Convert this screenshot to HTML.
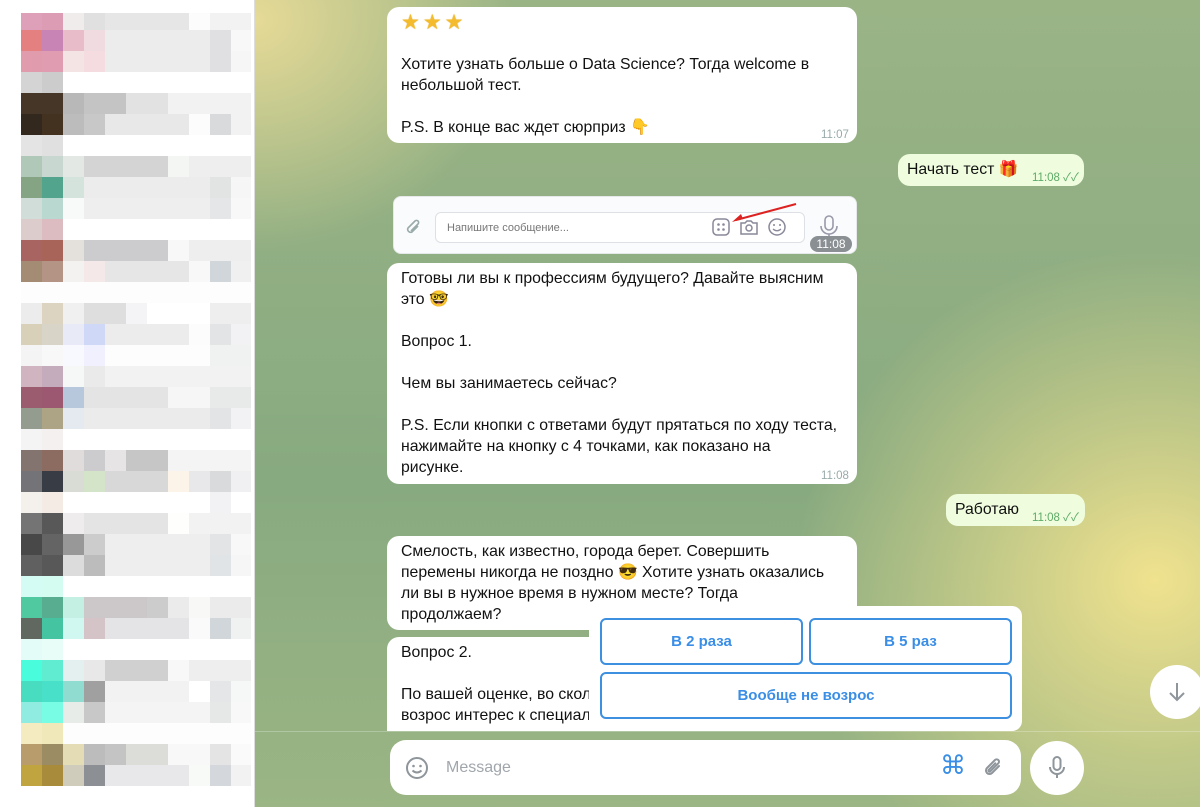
<!DOCTYPE html>
<html><head><meta charset="utf-8">
<style>
*{margin:0;padding:0;box-sizing:border-box}
body{width:1200px;height:807px;overflow:hidden;position:relative;font-family:"Liberation Sans","Noto Sans CJK SC",sans-serif;background:#fff}
#side{position:absolute;left:0;top:0;width:255px;height:807px;background:#fff;border-right:1px solid #ddd}
.r{position:absolute;left:21px;width:230px;height:21px}
#chat{position:absolute;left:255px;top:0;width:945px;height:807px;
background:radial-gradient(ellipse 360px 330px at 900px 580px,#f0e28e 0%,rgba(240,226,142,0) 100%),radial-gradient(ellipse 260px 230px at 0px 20px,#e6da96 0%,rgba(230,218,150,0) 100%),linear-gradient(180deg,#9ab486 0%,#88aa80 60%,#9bb584 100%)}
.b{position:absolute;background:#fff;border-radius:12px;font-size:15.8px;line-height:21px;color:#111;padding:0 14px;white-space:nowrap}
.o{background:#effdde}
.t{position:absolute;font-size:11.5px;color:#9aa}
.o .t{color:#5daa68}
.kb{position:absolute;top:606px;width:433px;height:125px;background:#fff;border-radius:10px}
.btn{position:absolute;border:2px solid #3d8fe0;border-radius:6px;color:#3a8ee6;font-weight:bold;font-size:15px;display:flex;align-items:center;justify-content:center}
</style></head><body>
<div id="side">
<div class="r" style="top:13px;height:17px;background:linear-gradient(90deg,#dea0b8 0 21px,#dc9cb4 21px 42px,#f0ecec 42px 63px,#e0e0e0 63px 84px,#e6e6e6 84px 168px,#fcfcfc 168px 189px,#f2f2f2 189px)"></div>
<div class="r" style="top:30px;background:linear-gradient(90deg,#e48080 0 21px,#c884b4 21px 42px,#e8bcc8 42px 63px,#f0dce0 63px 84px,#ececec 84px 189px,#e0e0e2 189px 210px,#f8f8f8 210px)"></div>
<div class="r" style="top:51px;background:linear-gradient(90deg,#e09cac 0 21px,#e09cb0 21px 42px,#f4e4e4 42px 63px,#f4dce0 63px 84px,#ececec 84px 189px,#e0e0e2 189px 210px,#f6f6f6 210px)"></div>
<div class="r" style="top:72px;background:linear-gradient(90deg,#d4d4d4 0 21px,#ccc 21px 42px,#fff 42px)"></div>
<div class="r" style="top:93px;background:linear-gradient(90deg,#463628 0 42px,#b8b8b8 42px 63px,#c4c4c4 63px 105px,#e2e2e2 105px 147px,#f2f2f2 147px)"></div>
<div class="r" style="top:114px;background:linear-gradient(90deg,#32281e 0 21px,#42321f 21px 42px,#bcbcbc 42px 63px,#c8c8c8 63px 84px,#e8e8e8 84px 168px,#fcfcfc 168px 189px,#d8dadc 189px 210px,#f2f2f2 210px)"></div>
<div class="r" style="top:135px;background:linear-gradient(90deg,#e4e4e4 0 21px,#e0e0e0 21px 42px,#fff 42px)"></div>
<div class="r" style="top:156px;background:linear-gradient(90deg,#b0c8b8 0 21px,#c8d8d0 21px 42px,#e4e8e4 42px 63px,#d4d4d4 63px 147px,#f4f6f4 147px 168px,#eeeeee 168px)"></div>
<div class="r" style="top:177px;background:linear-gradient(90deg,#84a484 0 21px,#52a48c 21px 42px,#d4e4dc 42px 63px,#ececec 63px 189px,#e2e4e4 189px 210px,#f6f6f6 210px)"></div>
<div class="r" style="top:198px;background:linear-gradient(90deg,#d0ddd8 0 21px,#b8d8d0 21px 42px,#f8fafa 42px 63px,#eeeeee 63px 189px,#e4e6e8 189px 210px,#f8f8f8 210px)"></div>
<div class="r" style="top:219px;background:linear-gradient(90deg,#dccccc 0 21px,#dcbcc0 21px 42px,#fff 42px)"></div>
<div class="r" style="top:240px;background:linear-gradient(90deg,#a86460 0 21px,#a86458 21px 42px,#e4e0dc 42px 63px,#cccccf 63px 147px,#f8f8f8 147px 168px,#eeeeee 168px)"></div>
<div class="r" style="top:261px;background:linear-gradient(90deg,#a48c74 0 21px,#b49484 21px 42px,#f4f2f0 42px 63px,#f4e8e8 63px 84px,#e6e6e6 84px 168px,#f8f8f8 168px 189px,#d0d6da 189px 210px,#f0f0f0 210px)"></div>
<div class="r" style="top:282px;background:#fdfdfd"></div>
<div class="r" style="top:303px;background:linear-gradient(90deg,#ececec 0 21px,#dcd4c0 21px 42px,#f0f0f0 42px 63px,#dedede 63px 105px,#f4f4f6 105px 126px,#fff 126px 189px,#eeeeee 189px)"></div>
<div class="r" style="top:324px;background:linear-gradient(90deg,#d8d0b8 0 21px,#d8d4c8 21px 42px,#e8eaf8 42px 63px,#d0d8f8 63px 84px,#ececec 84px 168px,#fcfcfc 168px 189px,#e2e4e6 189px 210px,#f2f2f4 210px)"></div>
<div class="r" style="top:345px;background:linear-gradient(90deg,#f4f4f4 0 21px,#f8f8f8 21px 42px,#f8f8ff 42px 63px,#f0f0ff 63px 84px,#fdfdfd 84px 189px,#f0f2f2 189px)"></div>
<div class="r" style="top:366px;background:linear-gradient(90deg,#d0b4c0 0 21px,#c4acbc 21px 42px,#f6f8f8 42px 63px,#eaeaea 63px 84px,#f2f2f2 84px)"></div>
<div class="r" style="top:387px;background:linear-gradient(90deg,#9c5c70 0 21px,#9c5870 21px 42px,#b8c8dc 42px 63px,#e4e4e4 63px 147px,#f6f6f6 147px 189px,#e8eaea 189px)"></div>
<div class="r" style="top:408px;background:linear-gradient(90deg,#949c90 0 21px,#aca484 21px 42px,#e4eaf0 42px 63px,#ebebeb 63px 189px,#e2e4e6 189px 210px,#f2f2f4 210px)"></div>
<div class="r" style="top:429px;background:linear-gradient(90deg,#f4f4f4 0 21px,#f4f0f0 21px 42px,#fff 42px)"></div>
<div class="r" style="top:450px;background:linear-gradient(90deg,#847470 0 21px,#8c6c60 21px 42px,#e0dcdc 42px 63px,#cccccf 63px 84px,#e6e4e4 84px 105px,#c6c6c6 105px 147px,#f4f4f4 147px)"></div>
<div class="r" style="top:471px;background:linear-gradient(90deg,#747478 0 21px,#383c44 21px 42px,#d8dcd4 42px 63px,#d4e4c8 63px 84px,#d8d8d8 84px 147px,#fcf4e8 147px 168px,#e8e8ea 168px 189px,#d8dadc 189px 210px,#f0f0f2 210px)"></div>
<div class="r" style="top:492px;background:linear-gradient(90deg,#f4f0ec 0 21px,#f4ece4 21px 42px,#fff 42px 189px,#f2f2f4 189px 210px,#fff 210px)"></div>
<div class="r" style="top:513px;background:linear-gradient(90deg,#747474 0 21px,#585858 21px 42px,#eeecec 42px 63px,#e4e4e4 63px 147px,#fefefc 147px 168px,#f2f2f2 168px)"></div>
<div class="r" style="top:534px;background:linear-gradient(90deg,#484848 0 21px,#646464 21px 42px,#989898 42px 63px,#ccc 63px 84px,#eeeeee 84px 189px,#e2e4e6 189px 210px,#f8f8f8 210px)"></div>
<div class="r" style="top:555px;background:linear-gradient(90deg,#606060 0 21px,#585858 21px 42px,#dcdcdc 42px 63px,#bcbcbc 63px 84px,#eeeeee 84px 189px,#e0e4e6 189px 210px,#f6f6f6 210px)"></div>
<div class="r" style="top:576px;background:linear-gradient(90deg,#d4fcf4 0 21px,#d4fcf0 21px 42px,#fff 42px)"></div>
<div class="r" style="top:597px;background:linear-gradient(90deg,#50c8a0 0 21px,#58ac90 21px 42px,#c4f0e4 42px 63px,#ccc8ca 63px 126px,#cccccc 126px 147px,#ebebeb 147px 168px,#f8f8f6 168px 189px,#ebebeb 189px)"></div>
<div class="r" style="top:618px;background:linear-gradient(90deg,#606860 0 21px,#44c4a0 21px 42px,#d0f8f0 42px 63px,#d4c4c8 63px 84px,#e4e4e6 84px 168px,#fafafa 168px 189px,#d0d6da 189px 210px,#f0f2f2 210px)"></div>
<div class="r" style="top:639px;background:linear-gradient(90deg,#e4fcf8 0 21px,#e8fcf8 21px 42px,#fff 42px)"></div>
<div class="r" style="top:660px;background:linear-gradient(90deg,#48fcdc 0 21px,#60ecd0 21px 42px,#e4f0f0 42px 63px,#e8e8e8 63px 84px,#d0d0d0 84px 147px,#f8f8f8 147px 168px,#eeeeee 168px)"></div>
<div class="r" style="top:681px;background:linear-gradient(90deg,#48dcc0 0 21px,#48e0c8 21px 42px,#90dcd0 42px 63px,#a0a0a0 63px 84px,#f2f2f2 84px 168px,#fff 168px 189px,#e4e6e8 189px 210px,#f6f8f8 210px)"></div>
<div class="r" style="top:702px;background:linear-gradient(90deg,#90ece0 0 21px,#78fce4 21px 42px,#e8ece8 42px 63px,#c8c8c8 63px 84px,#f4f4f4 84px 189px,#e6e8e8 189px 210px,#f8f8f8 210px)"></div>
<div class="r" style="top:723px;background:linear-gradient(90deg,#f4ecc0 0 21px,#f0e8b8 21px 42px,#fdfdfd 42px)"></div>
<div class="r" style="top:744px;background:linear-gradient(90deg,#b89c6c 0 21px,#9c8c64 21px 42px,#e4dcb4 42px 63px,#bcbcbc 63px 84px,#c4c4c4 84px 105px,#dcdcd8 105px 147px,#f8f8f8 147px 189px,#e4e4e4 189px 210px,#fafafa 210px)"></div>
<div class="r" style="top:765px;background:linear-gradient(90deg,#c0a440 0 21px,#a88c3c 21px 42px,#d0ccbc 42px 63px,#8c9094 63px 84px,#e8e8ea 84px 168px,#f8faf8 168px 189px,#d4d8dc 189px 210px,#f2f2f2 210px)"></div>
</div>
<div id="chat">
<div class="b" style="left:132px;top:7px;width:470px;height:136px;padding-top:5px">
<div style="font-size:21px;line-height:21px;color:#f4bc2c;letter-spacing:3px;font-family:'DejaVu Sans',sans-serif;text-shadow:0 0 1px #d89a10">★★★</div><div style="height:21px"></div>
Хотите узнать больше о Data Science? Тогда welcome в<br>небольшой тест.<br><br>P.S. В конце вас ждет сюрприз <span style="color:#e8a828">👇</span>
<div class="t" style="left:434px;top:118px">11:07</div></div>

<div class="b o" style="left:643px;top:154px;width:186px;height:32px;padding-top:5px;padding-left:9px">Начать тест <span style="color:#d33">🎁</span>
<div class="t" style="left:134px;top:14px">11:08 ✓✓</div></div>

<div style="position:absolute;left:138px;top:196px;width:464px;height:58px;background:#fafbfc;border-radius:8px;border:1px solid #e6e8ea">
<svg style="position:absolute;left:10px;top:20px" width="18" height="20" viewBox="0 0 18 20"><path d="M14 9l-6 6a3 3 0 0 1-4-4l7-7a2 2 0 0 1 3 3l-7 7" fill="none" stroke="#9aa" stroke-width="1.6"/></svg>
<div style="position:absolute;left:41px;top:15px;width:370px;height:31px;border:1px solid #dde0e4;border-radius:6px;background:#fff;font-size:11px;color:#777;padding:9px 11px">Напишите сообщение...</div>
<svg style="position:absolute;left:318px;top:21px" width="80" height="20" viewBox="0 0 80 20"><rect x="1" y="1" width="16" height="16" rx="4" fill="none" stroke="#889" stroke-width="1.5"/><circle cx="6.5" cy="6.5" r="1.3" fill="#889"/><circle cx="11.5" cy="6.5" r="1.3" fill="#889"/><circle cx="6.5" cy="11.5" r="1.3" fill="#889"/><circle cx="11.5" cy="11.5" r="1.3" fill="#889"/><path d="M29 5h4l2-2h4l2 2h4v11h-16z" fill="none" stroke="#889" stroke-width="1.5"/><circle cx="37" cy="10" r="3" fill="none" stroke="#889" stroke-width="1.5"/><circle cx="65" cy="9" r="8" fill="none" stroke="#889" stroke-width="1.5"/><circle cx="62" cy="7" r="1" fill="#889"/><circle cx="68" cy="7" r="1" fill="#889"/><path d="M61 11q4 3.5 8 0" fill="none" stroke="#889" stroke-width="1.3"/></svg>
<svg style="position:absolute;left:336px;top:4px" width="70" height="24"><path d="M66 3L6 19" stroke="#d22" stroke-width="2"/><path d="M2 21l9-8 2 5z" fill="#d22"/></svg>
<svg style="position:absolute;left:424px;top:18px" width="22" height="26" viewBox="0 0 22 26"><rect x="7" y="1" width="8" height="14" rx="4" fill="none" stroke="#99a" stroke-width="1.6"/><path d="M3 11a8 8 0 0 0 16 0M11 19v5" fill="none" stroke="#99a" stroke-width="1.6"/></svg>
<div style="position:absolute;left:416px;top:39px;width:42px;height:16px;background:#8a8f94;border-radius:8px;color:#fff;font-size:12px;text-align:center;line-height:16px">11:08</div>
</div>

<div class="b" style="left:132px;top:263px;width:470px;height:221px;padding-top:5px">
Готовы ли вы к профессиям будущего? Давайте выясним<br>это <span style="color:#e6b030">🤓</span><br><br>Вопрос 1.<br><br>Чем вы занимаетесь сейчас?<br><br>P.S. Если кнопки с ответами будут прятаться по ходу теста,<br>нажимайте на кнопку с 4 точками, как показано на<br>рисунке.
<div class="t" style="left:434px;top:203px">11:08</div></div>

<div class="b o" style="left:691px;top:494px;width:139px;height:32px;padding-top:5px;padding-left:9px">Работаю
<div class="t" style="left:86px;top:14px">11:08 ✓✓</div></div>

<div class="b" style="left:132px;top:536px;width:470px;height:94px;padding-top:5px">
Смелость, как известно, города берет. Совершить<br>перемены никогда не поздно <span style="color:#e6b030">😎</span> Хотите узнать оказались<br>ли вы в нужное время в нужном месте? Тогда<br>продолжаем?</div>

<div class="b" style="left:132px;top:637px;width:470px;height:94px;padding-top:5px;border-radius:12px 12px 0 0;overflow:hidden">
Вопрос 2.<br><br>По вашей оценке, во сколько раз<br>возрос интерес к специалистам</div>

<div class="kb" style="left:334px">
<div class="btn" style="left:11px;top:12px;width:203px;height:47px">В 2 раза</div>
<div class="btn" style="left:220px;top:12px;width:203px;height:47px">В 5 раз</div>
<div class="btn" style="left:11px;top:66px;width:412px;height:47px">Вообще не возрос</div>
</div>

<div style="position:absolute;left:0;top:731px;width:945px;height:1px;background:rgba(255,255,255,0.25)"></div>
<div style="position:absolute;left:135px;top:740px;width:631px;height:55px;background:#fff;border-radius:16px">
<svg style="position:absolute;left:15px;top:16px" width="24" height="24" viewBox="0 0 24 24"><circle cx="12" cy="12" r="10" fill="none" stroke="#8e959b" stroke-width="2"/><circle cx="8.5" cy="10" r="1.3" fill="#8e959b"/><circle cx="15.5" cy="10" r="1.3" fill="#8e959b"/><path d="M7.5 14.5q4.5 4 9 0" fill="none" stroke="#8e959b" stroke-width="2"/></svg>
<div style="position:absolute;left:56px;top:19px;font-size:16px;color:#a0a6ab">Message</div>
<div style="position:absolute;left:550px;top:11px;font-size:26px;color:#3a8ee6;font-family:'DejaVu Sans',sans-serif">⌘</div>
<svg style="position:absolute;left:592px;top:16px" width="22" height="24" viewBox="0 0 22 24"><path d="M17 10l-7 7a3.5 3.5 0 0 1-5-5l8-8a2.3 2.3 0 0 1 3.3 3.3l-8 8a1 1 0 0 1-1.5-1.5l6.5-6.5" fill="none" stroke="#8e959b" stroke-width="2" stroke-linecap="round"/></svg>
</div>
<div style="position:absolute;left:775px;top:741px;width:54px;height:54px;background:#fff;border-radius:50%">
<svg style="position:absolute;left:15px;top:14px" width="24" height="26" viewBox="0 0 24 26"><rect x="8.5" y="2" width="7" height="13" rx="3.5" fill="none" stroke="#8e959b" stroke-width="2"/><path d="M5 12a7 7 0 0 0 14 0M12 19v4" fill="none" stroke="#8e959b" stroke-width="2"/></svg>
</div>
<div style="position:absolute;left:895px;top:665px;width:54px;height:54px;background:#fff;border-radius:50%">
<svg style="position:absolute;left:15px;top:15px" width="24" height="24" viewBox="0 0 24 24"><path d="M12 3v17M5 13l7 7 7-7" fill="none" stroke="#8e959b" stroke-width="2"/></svg>
</div>
</div>
</body></html>
